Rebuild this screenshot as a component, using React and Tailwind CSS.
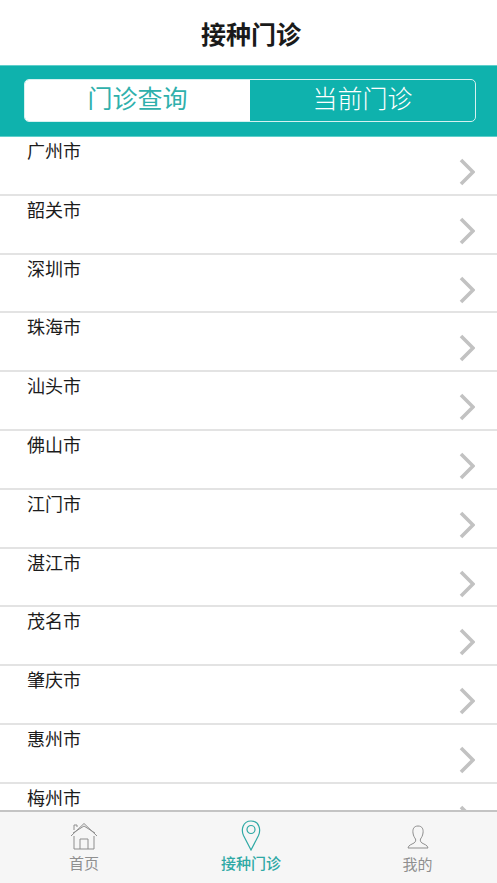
const cities = ["广州市","韶关市","深圳市","珠海市","汕头市","佛山市","江门市","湛江市","茂名市","肇庆市","惠州市","梅州市"];

function Row({ name }) {
  return (
    <div className="h-[58.8px] shrink-0 border-b-2 border-[#e3e3e3] pl-[27px] pr-[22px] flex justify-between">
      <span className="text-[18px] leading-[24px] mt-[1px] text-[#1c1c1c]">{name}</span>
      <svg width="16" height="28" viewBox="0 0 16 28" className="mt-[21px]" fill="none">
        <path d="M2 2 L14 14 L2 26" stroke="#c2c2c2" strokeWidth="3.6" />
      </svg>
    </div>
  );
}

export default function App() {
  return (
    <div className="w-[497px] h-[883px] flex flex-col overflow-hidden bg-white" style={{ fontFamily: '"Noto Sans CJK SC", "Liberation Sans", sans-serif' }}>
      <header className="h-[65px] shrink-0 flex items-center justify-center pt-[2px] pl-[5px]">
        <h1 className="text-[25px] font-bold text-[#1a1a1a]">接种门诊</h1>
      </header>
      <div className="h-[72px] shrink-0 bg-[#0fb2ad] border-y border-[#5fcfcb] pl-[24px] pr-[21px] py-[13px]">
        <div className="h-[43px] flex rounded-[5px] border border-[#d5f1f0] overflow-hidden">
          <div className="w-[225px] bg-white flex items-center justify-center text-[#2fb0ac] text-[25px] pb-[5px]">门诊查询</div>
          <div className="flex-1 flex items-center justify-center text-white text-[25px] font-light pb-[5px]">当前门诊</div>
        </div>
      </div>
      <main className="flex-1 overflow-hidden flex flex-col">
        {cities.map((c) => <Row key={c} name={c} />)}
      </main>
      <nav className="h-[73px] w-[501px] shrink-0 bg-[#f6f6f6] border-t-2 border-[#c4c4c4] grid grid-cols-[168px_166px_167px]">
        <div className="flex flex-col items-center pt-[10px] text-[#8f8f8f]">
          <svg width="28" height="28" viewBox="0 0 28 28" fill="none" stroke="#8e8e8e" strokeWidth="1">
            <path d="M1 14 L14 1.5 L27 14" />
            <path d="M4 8 V3 H7 V5" />
            <path d="M3 11 L14 4 L25 11" />
            <path d="M4 14 V27 H24 V14" />
            <path d="M10 27 V17 H18 V27" />
          </svg>
          <span className="text-[15px] leading-[20px] mt-[3px]">首页</span>
        </div>
        <div className="flex flex-col items-center pt-[8px] text-[#2fa9a5]">
          <svg width="20" height="31" viewBox="0 0 20 31" fill="none" stroke="#2fa9a5" strokeWidth="1.2">
            <path d="M10 30 L2.5 15.5 C0 10 1.5 1 10 1 C18.5 1 20 10 17.5 15.5 Z" />
            <circle cx="10" cy="9.5" r="4" />
          </svg>
          <span className="text-[15px] leading-[20px] font-medium mt-[2px]">接种门诊</span>
        </div>
        <div className="flex flex-col items-center pt-[13px] text-[#8f8f8f]">
          <svg width="22" height="24" viewBox="0 0 22 24" fill="none" stroke="#8e8e8e" strokeWidth="1">
            <path d="M11 1 C6.5 1 5.5 4.5 6 8 C6.4 11 7.5 12.5 8.5 14 C9 15.5 8.5 17 7 18 C4.5 19.5 1.5 20 1 23 H21 C20.5 20 17.5 19.5 15 18 C13.5 17 13 15.5 13.5 14 C14.5 12.5 15.6 11 16 8 C16.5 4.5 15.5 1 11 1 Z" />
          </svg>
          <span className="text-[15px] leading-[20px] mt-[5px]">我的</span>
        </div>
      </nav>
    </div>
  );
}
